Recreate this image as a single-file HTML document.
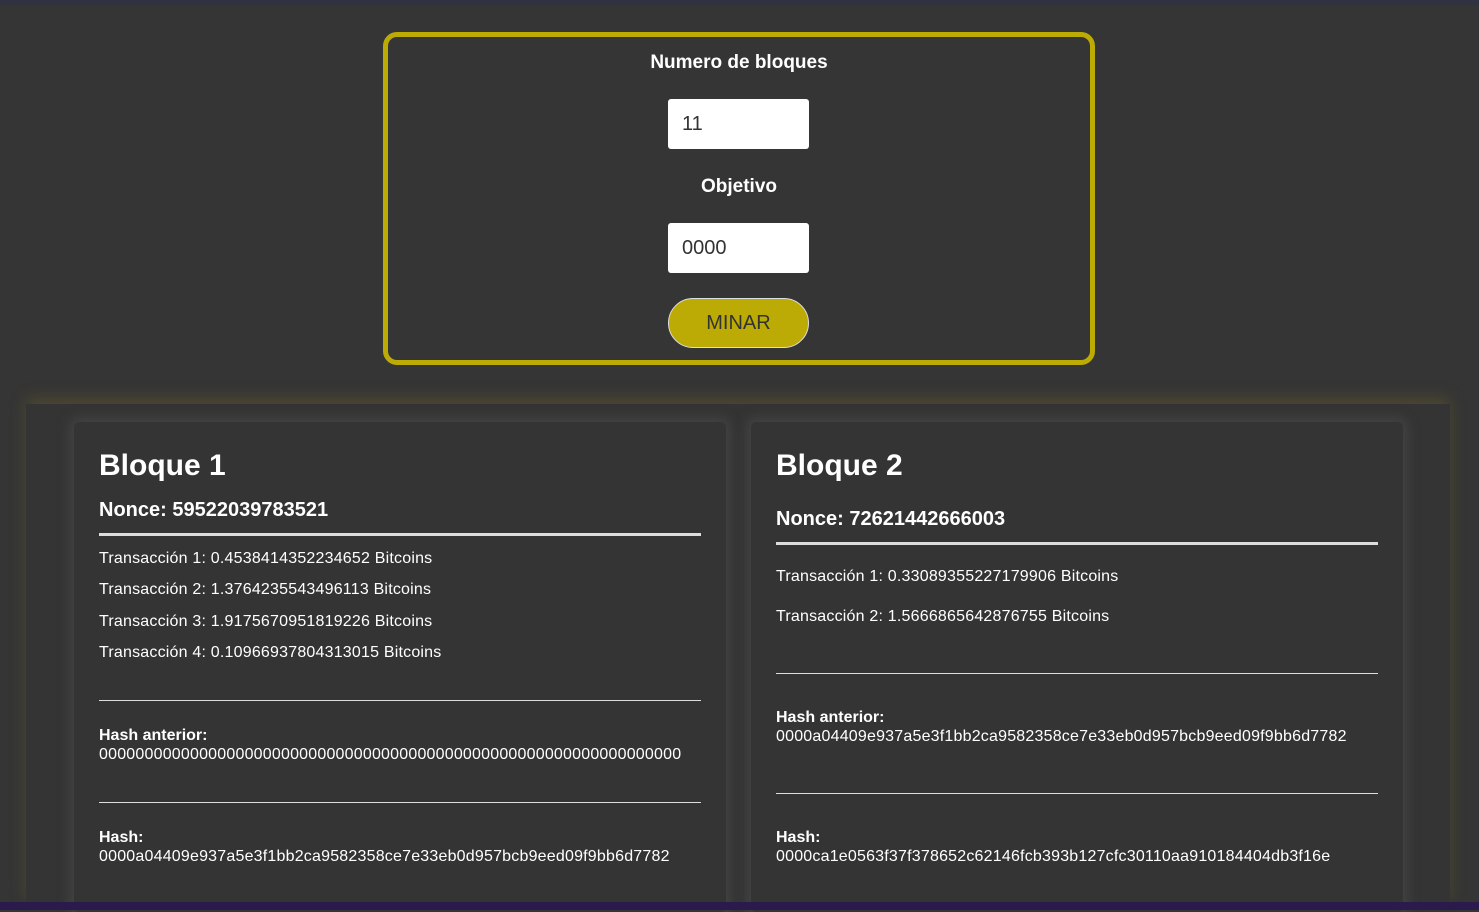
<!DOCTYPE html>
<html><head><meta charset="utf-8"><style>
*{margin:0;padding:0;box-sizing:border-box}
body{width:1479px;height:910px;background:#353535;font-family:"Liberation Sans",Arial,sans-serif;color:#fff;position:relative;overflow:hidden}
.t{position:absolute;white-space:nowrap;line-height:20px}
.topbar{position:absolute;left:0;top:0;width:1479px;height:5px;background:#30323f}
.bot{position:absolute;left:0;top:902px;width:1479px;height:8px;background:#2b1a4c}
.panel{position:absolute;left:383px;top:32px;width:712px;height:333px;border:5px solid #bcab04;border-radius:14px}
.inp{position:absolute;left:668px;width:141px;height:50px;background:#fff;border-radius:3px;color:#333;font-size:20px;padding:0 14px;line-height:50px}
.btn{position:absolute;left:668px;top:298px;width:141px;height:50px;background:#bcab04;border-radius:25px;border:1px solid #ddd;color:#333;font-size:20px;text-align:center;line-height:48px}
.cont{position:absolute;left:26px;top:404px;width:1424px;height:500px;background:#343434;box-shadow:0 -6px 14px rgba(120,110,40,.35)}
.card{position:absolute;top:422px;width:652px;height:490px;background:#343434;border-radius:5px;box-shadow:0 0 12px 4px rgba(70,70,70,.9)}
.h{position:absolute;height:3px;background:#ddd;width:602px}
.l{position:absolute;height:1px;background:#ddd;width:602px}
.ti{font-size:30px;font-weight:bold;line-height:36px}
.no{font-size:20px;font-weight:bold}
.tx{font-size:16px;letter-spacing:0.2px}
.b{font-size:16px;font-weight:bold}
</style></head><body>
<div class="topbar"></div>
<div class="panel"></div>
<div class="t" style="left:383px;width:712px;text-align:center;top:53px;font-size:19px;font-weight:bold">Numero de bloques</div>
<div class="inp" style="top:99px">11</div>
<div class="t" style="left:383px;width:712px;text-align:center;top:177px;font-size:19px;font-weight:bold">Objetivo</div>
<div class="inp" style="top:223px">0000</div>
<div class="btn">MINAR</div>
<div class="cont"></div>
<div class="card" style="left:74px"></div>
<div class="card" style="left:751px"></div>

<div class="t ti" style="left:99px;top:448px">Bloque 1</div>
<div class="t no" style="left:99px;top:500px">Nonce: 59522039783521</div>
<div class="h" style="left:99px;top:533px"></div>
<div class="t tx" style="left:99px;top:549px">Transacción 1: 0.4538414352234652 Bitcoins</div>
<div class="t tx" style="left:99px;top:580px">Transacción 2: 1.3764235543496113 Bitcoins</div>
<div class="t tx" style="left:99px;top:612px">Transacción 3: 1.9175670951819226 Bitcoins</div>
<div class="t tx" style="left:99px;top:643px">Transacción 4: 0.10966937804313015 Bitcoins</div>
<div class="l" style="left:99px;top:700px"></div>
<div class="t b" style="left:99px;top:726px">Hash anterior:</div>
<div class="t tx" style="left:99px;top:745px">0000000000000000000000000000000000000000000000000000000000000000</div>
<div class="l" style="left:99px;top:802px"></div>
<div class="t b" style="left:99px;top:828px">Hash:</div>
<div class="t tx" style="left:99px;top:847px">0000a04409e937a5e3f1bb2ca9582358ce7e33eb0d957bcb9eed09f9bb6d7782</div>

<div class="t ti" style="left:776px;top:448px">Bloque 2</div>
<div class="t no" style="left:776px;top:509px">Nonce: 72621442666003</div>
<div class="h" style="left:776px;top:542px"></div>
<div class="t tx" style="left:776px;top:567px">Transacción 1: 0.33089355227179906 Bitcoins</div>
<div class="t tx" style="left:776px;top:607px">Transacción 2: 1.5666865642876755 Bitcoins</div>
<div class="l" style="left:776px;top:673px"></div>
<div class="t b" style="left:776px;top:708px">Hash anterior:</div>
<div class="t tx" style="left:776px;top:727px">0000a04409e937a5e3f1bb2ca9582358ce7e33eb0d957bcb9eed09f9bb6d7782</div>
<div class="l" style="left:776px;top:793px"></div>
<div class="t b" style="left:776px;top:828px">Hash:</div>
<div class="t tx" style="left:776px;top:847px">0000ca1e0563f37f378652c62146fcb393b127cfc30110aa910184404db3f16e</div>
<div class="bot"></div>
</body></html>
